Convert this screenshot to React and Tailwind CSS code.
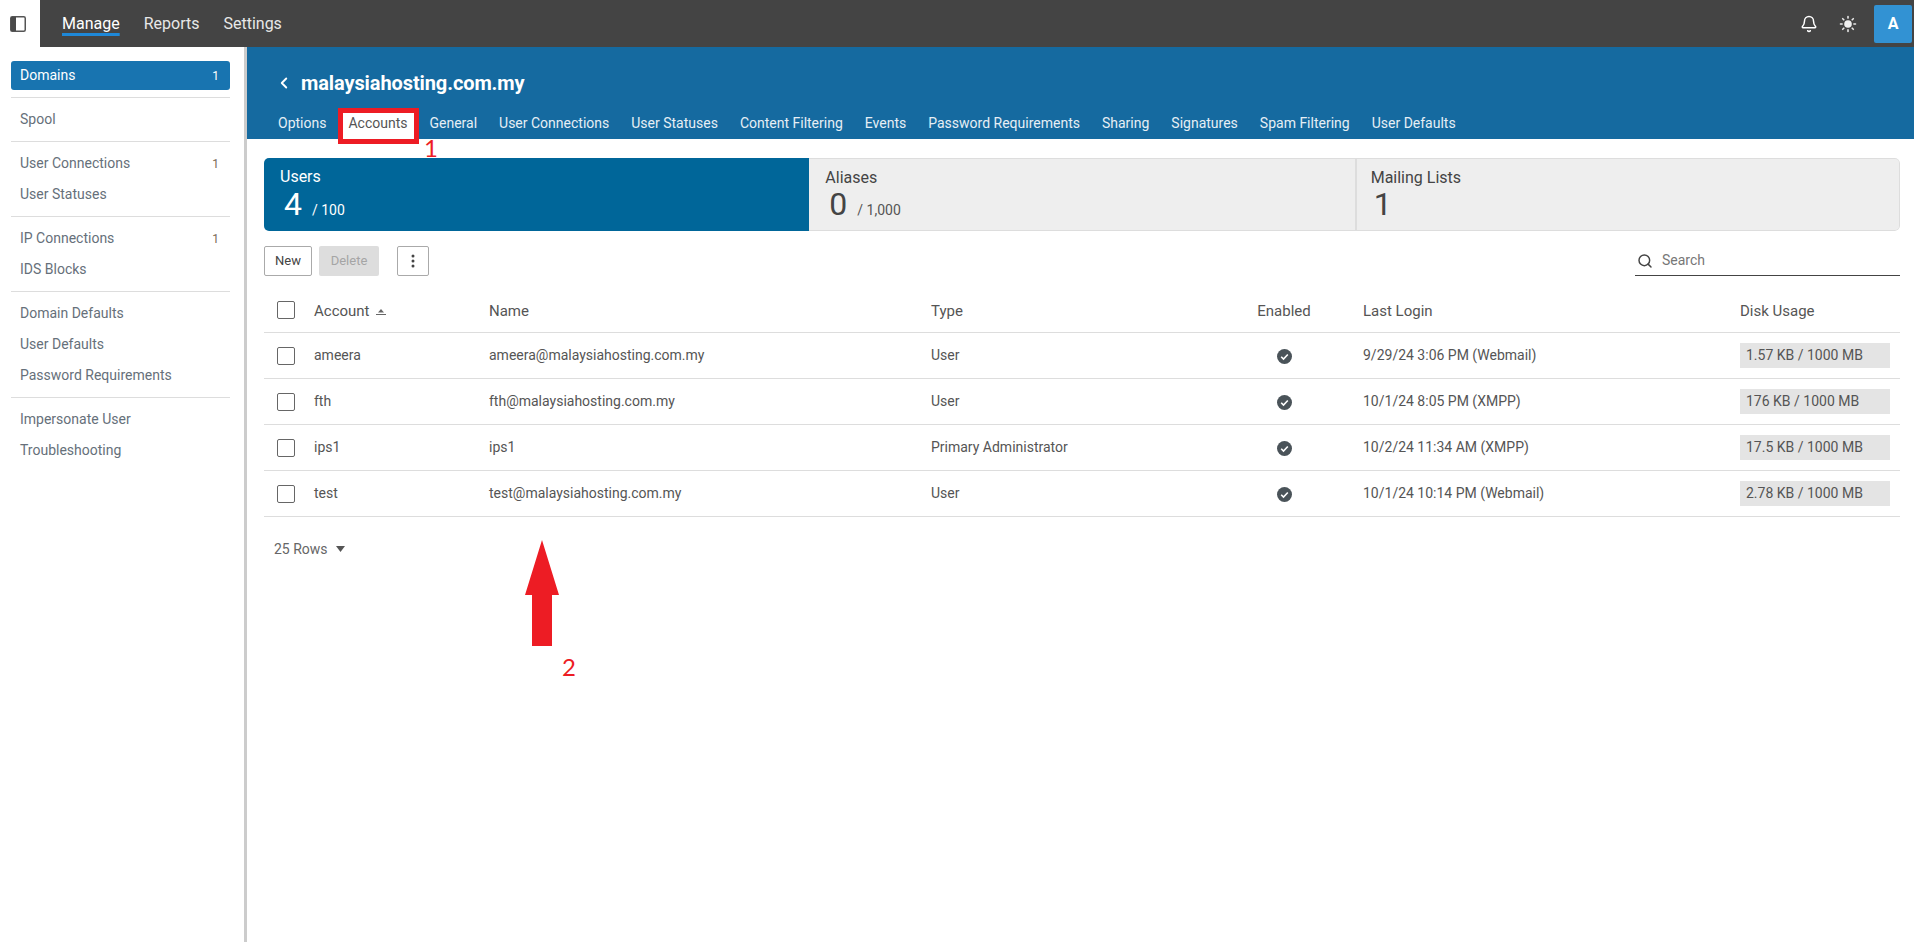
import React from "react";
import { Bell, Search, ChevronLeft } from "lucide-react";

const tabs = ["Options", "Accounts", "General", "User Connections", "User Statuses", "Content Filtering", "Events", "Password Requirements", "Sharing", "Signatures", "Spam Filtering", "User Defaults"];

const sideGroups = [
    [["Spool"]],
    [["User Connections", "1"], ["User Statuses"]],
    [["IP Connections", "1"], ["IDS Blocks"]],
    [["Domain Defaults"], ["User Defaults"], ["Password Requirements"]],
    [["Impersonate User"], ["Troubleshooting"]],
];

const accounts = [
    { account: "ameera", name: "ameera@malaysiahosting.com.my", type: "User", login: "9/29/24 3:06 PM (Webmail)", disk: "1.57 KB / 1000 MB" },
    { account: "fth", name: "fth@malaysiahosting.com.my", type: "User", login: "10/1/24 8:05 PM (XMPP)", disk: "176 KB / 1000 MB" },
    { account: "ips1", name: "ips1", type: "Primary Administrator", login: "10/2/24 11:34 AM (XMPP)", disk: "17.5 KB / 1000 MB" },
    { account: "test", name: "test@malaysiahosting.com.my", type: "User", login: "10/1/24 10:14 PM (Webmail)", disk: "2.78 KB / 1000 MB" },
];

const gridCols = "grid grid-cols-[50px_175px_442px_274px_158px_377px_160px] items-center";

const Checkbox = () => (
    <span className="block w-[18px] h-[18px] ml-[13px] border border-[#666] rounded-[2px] bg-white" />
);

const EnabledIcon = () => (
    <svg width="15" height="15" viewBox="0 0 15 15" className="mx-auto mt-[2px]">
        <circle cx="7.5" cy="7.5" r="7.5" fill="#4a5359" />
        <path d="M4.2 7.7l2.3 2.3 4.3-4.5" fill="none" stroke="#fff" strokeWidth="1.6" />
    </svg>
);

const SunIcon = () => (
    <svg width="18" height="18" viewBox="0 0 18 18" className="ml-[21px]" stroke="#e8e8e8" strokeWidth="1.6" strokeLinecap="round">
        <circle cx="9" cy="9" r="3.8" fill="#f0f0f0" stroke="none" />
        <path d="M9 1.5v1.6M9 14.9v1.6M1.5 9h1.6M14.9 9h1.6M3.7 3.7l1.1 1.1M13.2 13.2l1.1 1.1M3.7 14.3l1.1-1.1M13.2 4.8l1.1-1.1" />
    </svg>
);

const App = () => {
    return (
        <div className="relative h-[942px] w-[1914px] overflow-hidden bg-white flex flex-col font-['Roboto',sans-serif] text-[14px] text-[#555]">
            {/* top bar */}
            <div className="flex h-[47px] shrink-0">
                <div className="w-10 flex items-center justify-center bg-white pr-[4px]">
                    <svg width="16" height="16" viewBox="0 0 16 16">
                        <rect x="0.75" y="0.75" width="14.5" height="14.5" rx="1.5" fill="none" stroke="#555" strokeWidth="1.5" />
                        <rect x="1" y="1" width="5" height="14" fill="#4a4a4a" />
                    </svg>
                </div>
                <div className="flex-1 bg-[#444444] flex items-center pl-[22px] text-[16px] text-[#e8e8e8]">
                    <span className="text-white underline decoration-[#1e88d8] decoration-[3px] underline-offset-[4px]">Manage</span>
                    <span className="ml-6">Reports</span>
                    <span className="ml-6">Settings</span>
                    <div className="ml-auto flex items-center pr-[2px]">
                        <Bell size={18} strokeWidth={2} className="text-white" />
                        <SunIcon />
                        <div className="ml-[17px] w-[38px] h-[38px] bg-[#3292d3] rounded-[2px] flex items-center justify-center text-white font-bold text-[16px]">A</div>
                    </div>
                </div>
            </div>

            <div className="flex flex-1 min-h-0">
                {/* sidebar */}
                <div className="w-[247px] shrink-0 border-r-[3px] border-[#cccccc] pl-[11px] pr-[14px] pt-[14px] text-[#66707a]">
                    <div className="flex items-center justify-between h-[29px] mb-[7px] pl-[9px] pr-[11px] rounded-[3px] bg-[#1874b0] text-white">
                        <span>Domains</span>
                        <span className="text-[12px]">1</span>
                    </div>
                    {sideGroups.map((group, i) => (
                        <div key={i}>
                            <div className="h-px bg-[#dddddd] mb-1.5" />
                            {group.map(([label, count]) => (
                                <div key={label} className="flex items-center justify-between h-[31px] pl-[9px] pr-[11px]">
                                    <span>{label}</span>
                                    {count && <span className="text-[12px] text-[#7a6a55]">{count}</span>}
                                </div>
                            ))}
                            {i < sideGroups.length - 1 && <div className="h-1.5" />}
                        </div>
                    ))}
                </div>

                {/* main */}
                <div className="flex-1 min-w-0">
                    <div className="h-[92px] bg-[#156aa0] flex flex-col">
                        <div className="flex items-center h-[61px] pl-[28px] pt-[11px] text-white">
                            <ChevronLeft size={18} strokeWidth={2.5} />
                            <span className="ml-[8px] text-[20px] font-bold tracking-[-0.1px]">malaysiahosting.com.my</span>
                        </div>
                        <div className="flex h-[31px] pl-[20px]">
                            {tabs.map((tab) => (
                                <div key={tab} className={tab === "Accounts" ? "px-[9px] mx-[2px] bg-white text-[#555] flex items-center" : "px-[9px] mx-[2px] text-[#e6eff5] flex items-center"}>
                                    {tab}
                                </div>
                            ))}
                        </div>
                    </div>

                    <div className="px-[14px] ml-[3px]">
                        {/* summary tabs */}
                        <div className="mt-[19px] h-[73px] grid grid-cols-3 rounded-[5px] overflow-hidden">
                            <div className="bg-[#006699] text-white px-4 pt-[9px]">
                                <div className="text-[16px] leading-5">Users</div>
                                <div className="flex items-baseline pl-[4px] leading-[34px]">
                                    <span className="text-[32px]">4</span>
                                    <span className="ml-[10px]">/ 100</span>
                                </div>
                            </div>
                            <div className="bg-[#eeeeee] text-[#444] px-4 pt-[8px] border-y border-[#dddddd]">
                                <div className="text-[16px] leading-5 pt-px">Aliases</div>
                                <div className="flex items-baseline pl-[4px] leading-[33px]">
                                    <span className="text-[32px]">0</span>
                                    <span className="ml-[10px] text-[#555]">/ 1,000</span>
                                </div>
                            </div>
                            <div className="bg-[#eeeeee] text-[#444] pl-[14px] pr-4 pt-[8px] border border-[#dddddd] border-l-2 rounded-r-[5px]">
                                <div className="text-[16px] leading-5 pt-px">Mailing Lists</div>
                                <div className="flex items-baseline pl-[3px] leading-[33px]">
                                    <span className="text-[32px]">1</span>
                                </div>
                            </div>
                        </div>

                        {/* toolbar */}
                        <div className="flex items-start mt-[15px] h-[30px]">
                            <button className="w-[48px] h-[30px] border border-[#aaa] rounded-[2px] text-[13px] text-[#444]">New</button>
                            <button className="w-[60px] h-[30px] ml-[7px] bg-[#dddddd] rounded-[2px] text-[13px] text-[#a5a5a5]">Delete</button>
                            <button className="w-[32px] h-[30px] ml-[18px] border border-[#aaa] rounded-[2px] flex items-center justify-center">
                                <svg width="4" height="14" viewBox="0 0 4 14" fill="#444">
                                    <circle cx="2" cy="2" r="1.5" />
                                    <circle cx="2" cy="7" r="1.5" />
                                    <circle cx="2" cy="12" r="1.5" />
                                </svg>
                            </button>
                            <div className="ml-auto w-[265px] h-[30px] border-b border-[#444] flex items-center pl-[2px]">
                                <Search size={16} strokeWidth={2.2} className="text-[#444]" />
                                <span className="ml-[9px] text-[#777]">Search</span>
                            </div>
                        </div>

                        {/* table */}
                        <div className={`${gridCols} mt-[10px] h-[47px] border-b border-[#dddddd] text-[15px]`}>
                            <div className="pt-[1px]"><Checkbox /></div>
                            <div className="flex items-center pt-[5px]">
                                Account
                                <svg width="10" height="7" viewBox="0 0 10 7" className="ml-[6px] mt-[2px]" fill="#666">
                                    <path d="M5 0l3 3.5H2z" />
                                    <rect x="0" y="5" width="10" height="1" />
                                </svg>
                            </div>
                            <div className="pt-[5px]">Name</div>
                            <div className="pt-[5px]">Type</div>
                            <div className="text-center pt-[5px]">Enabled</div>
                            <div className="pt-[5px]">Last Login</div>
                            <div className="pt-[5px]">Disk Usage</div>
                        </div>
                        {accounts.map((row) => (
                            <div key={row.account} className={`${gridCols} h-[46px] border-b border-[#dddddd]`}>
                                <Checkbox />
                                <div>{row.account}</div>
                                <div>{row.name}</div>
                                <div>{row.type}</div>
                                <div><EnabledIcon /></div>
                                <div>{row.login}</div>
                                <div className="w-[150px] h-[25px] bg-[#e4e4e4] flex items-center pl-[6px]">{row.disk}</div>
                            </div>
                        ))}

                        <div className="flex items-center mt-[23px] ml-[10px] h-[18px] text-[#666]">
                            <span>25 Rows</span>
                            <svg width="9" height="6" viewBox="0 0 9 6" className="ml-[8px]" fill="#555">
                                <path d="M0 0h9L4.5 6z" />
                            </svg>
                        </div>
                    </div>
                </div>
            </div>

            {/* annotations drawn on the screenshot */}
            <div className="absolute left-[338px] top-[108px] w-[81px] h-[36px] border-[5px] border-[#ed1c24]" />
            <span className="absolute left-[424px] top-[134px] text-[24px] leading-7 text-[#ed1c24] font-['Lato',sans-serif]">1</span>
            <svg className="absolute left-[525px] top-[540px]" width="34" height="106" viewBox="0 0 34 106">
                <path d="M17 0L34 55H27V106H7V55H0z" fill="#ed1c24" />
            </svg>
            <span className="absolute left-[562px] top-[653px] text-[24px] leading-7 text-[#ed1c24] font-['Lato',sans-serif]">2</span>
        </div>
    );
};

export default App;
